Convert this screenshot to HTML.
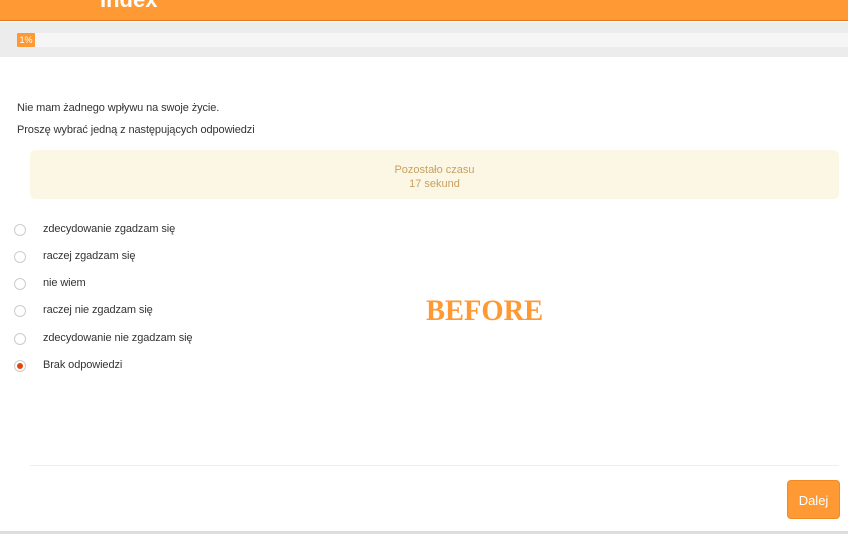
<!DOCTYPE html>
<html><head><style>
*{margin:0;padding:0;box-sizing:border-box}
body{width:848px;height:534px;background:#fff;font-family:"Liberation Sans",sans-serif;position:relative;overflow:hidden;color:#333}
.hdr{position:absolute;left:0;top:0;width:848px;height:21px;background:#ff9933;border-bottom:1px solid #e07a20;overflow:hidden}
.hdr span{position:absolute;left:100px;top:-13px;color:#fff;font-weight:bold;font-size:22px}
.pbg{position:absolute;left:0;top:22px;width:848px;height:35px;background:#ececec}
.bar{position:absolute;left:17px;top:33px;width:831px;height:14px;background:#f5f5f5}
.pct{position:absolute;left:17px;top:33px;width:18px;height:14px;background:#ff9933;color:#fff;font-size:9px;line-height:14px;text-align:center;border-radius:1px}
.q{position:absolute;left:17px;font-size:11px;color:#333;letter-spacing:-0.1px}
.timer{position:absolute;left:30px;top:150px;width:809px;height:49px;background:#fcf7e5;border-radius:5px;color:#c9a05f;font-size:11px;text-align:center;line-height:14px;padding-top:13px}
.opt{position:absolute;left:43px;font-size:11px;color:#333;letter-spacing:-0.1px}
.r{position:absolute;left:14px;width:12px;height:12px;border:1px solid #ccc;border-radius:50%;background:#fff}
.r.on::after{content:"";position:absolute;left:2px;top:2px;width:6px;height:6px;border-radius:50%;background:#e2450f}
.bf{position:absolute;left:426px;top:294px;font-family:"Liberation Serif",serif;font-weight:bold;font-size:30px;color:#ff9933;transform:scaleX(0.95);transform-origin:left}
.line{position:absolute;left:30px;top:465px;width:809px;height:1px;background:#eee}
.btn{position:absolute;left:787px;top:480px;width:53px;height:39px;background:#ff9933;border:1px solid #f08a25;border-radius:4px;color:#fff;font-size:13px;text-align:center;line-height:39px}
.bot{position:absolute;left:0;top:531px;width:848px;height:3px;background:#ddd}
</style></head><body>
<div class="hdr"><span>Index</span></div>
<div class="pbg"></div><div class="bar"></div><div class="pct">1%</div>
<div class="q" style="top:102px">Nie mam żadnego wpływu na swoje życie.</div>
<div class="q" style="top:124px">Proszę wybrać jedną z następujących odpowiedzi</div>
<div class="timer">Pozostało czasu<br>17 sekund</div>
<div class="r" style="top:224px"></div><div class="opt" style="top:223px">zdecydowanie zgadzam się</div>
<div class="r" style="top:251px"></div><div class="opt" style="top:250px">raczej zgadzam się</div>
<div class="r" style="top:278px"></div><div class="opt" style="top:277px">nie wiem</div>
<div class="r" style="top:305px"></div><div class="opt" style="top:304px">raczej nie zgadzam się</div>
<div class="r" style="top:333px"></div><div class="opt" style="top:332px">zdecydowanie nie zgadzam się</div>
<div class="r on" style="top:360px"></div><div class="opt" style="top:359px">Brak odpowiedzi</div>
<div class="bf">BEFORE</div>
<div class="line"></div>
<div class="btn">Dalej</div>
<div class="bot"></div>
</body></html>
